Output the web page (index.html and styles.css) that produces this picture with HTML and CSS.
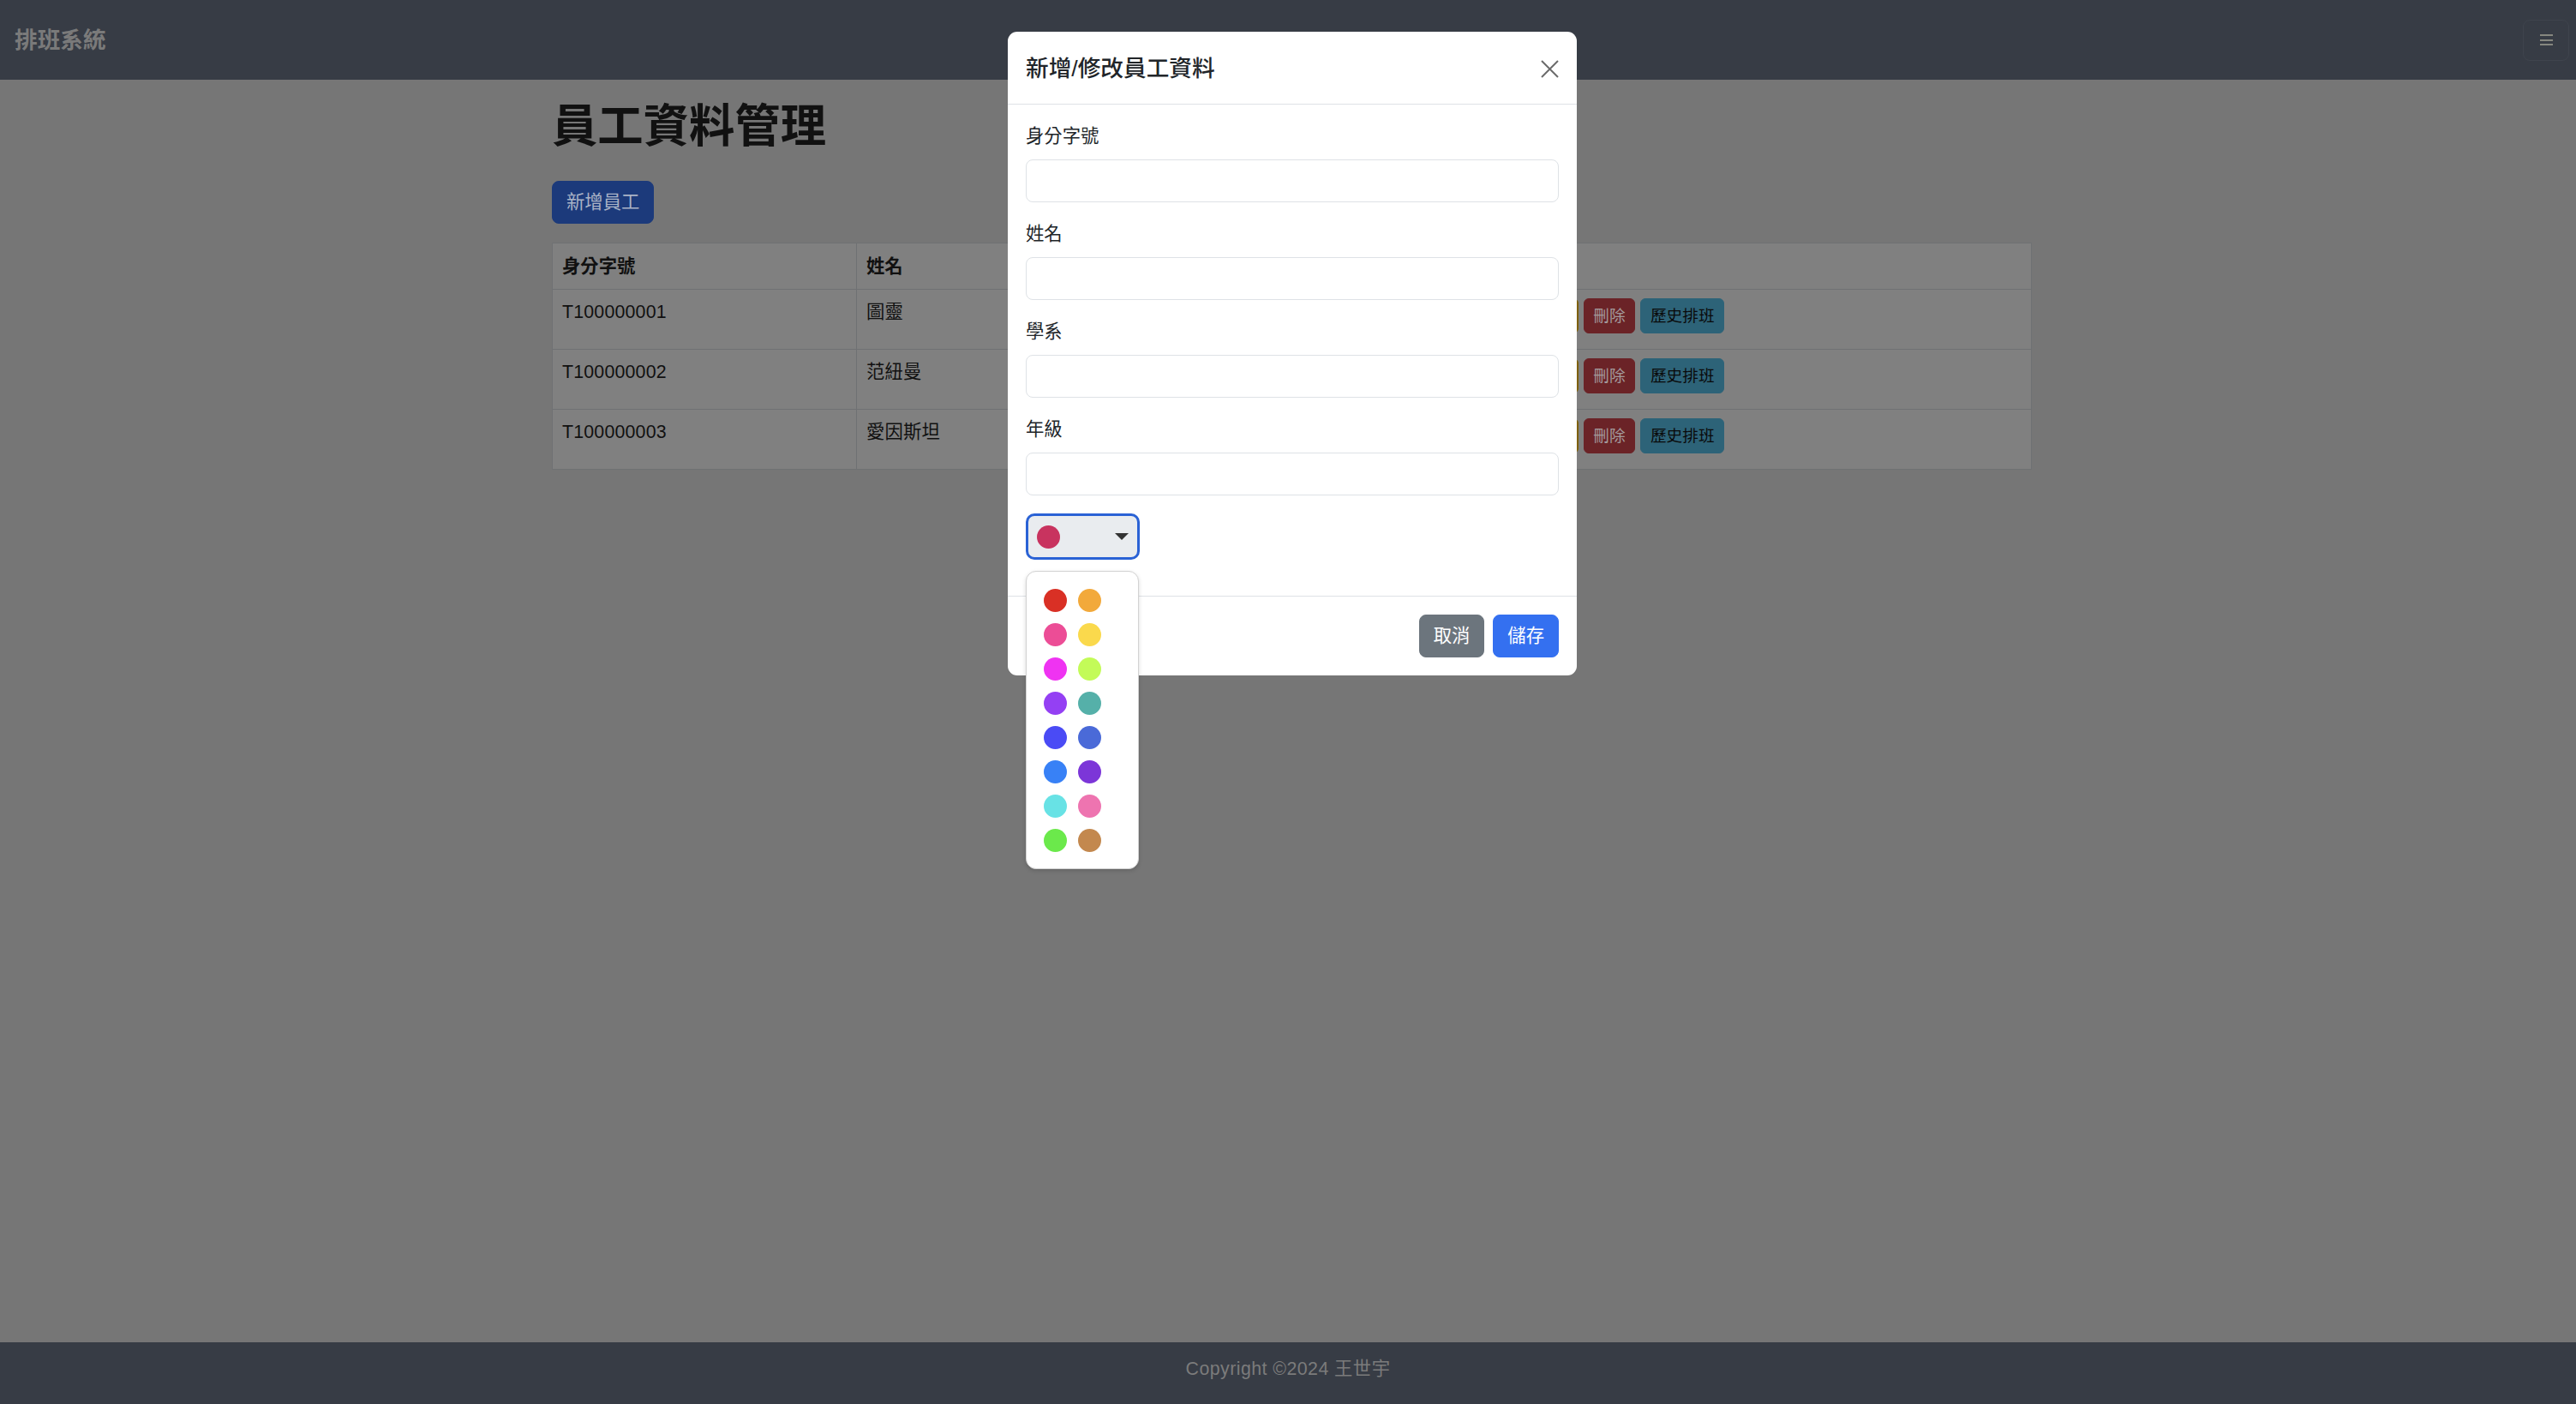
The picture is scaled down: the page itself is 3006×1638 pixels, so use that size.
FILE: index.html
```html
<!DOCTYPE html>
<html lang="zh-Hant">
<head>
<meta charset="utf-8">
<title>排班系統</title>
<link rel="stylesheet" href="styles.css">
</head>
<body>
<nav class="navbar">
  <span class="brand">排班系統</span>
  <button class="toggler" aria-label="menu"><span class="bar"></span><span class="bar"></span><span class="bar"></span></button>
</nav>

<main class="main">
  <div class="container">
    <h1 class="page-title">員工資料管理</h1>
    <button class="btn btn-add">新增員工</button>
    <table class="emp-table">
      <colgroup>
        <col class="c-id"><col class="c-name"><col class="c-dept"><col class="c-grade"><col>
      </colgroup>
      <thead>
        <tr><th>身分字號</th><th>姓名</th><th>學系</th><th>年級</th><th>操作</th></tr>
      </thead>
      <tbody>
        <tr>
          <td>T100000001</td><td>圖靈</td><td>資訊工程</td><td>4</td>
          <td><div class="actions"><button class="btn-sm btn-edit">修改</button><button class="btn-sm btn-del">刪除</button><button class="btn-sm btn-hist">歷史排班</button></div></td>
        </tr>
        <tr>
          <td>T100000002</td><td>范紐曼</td><td>數學</td><td>3</td>
          <td><div class="actions"><button class="btn-sm btn-edit">修改</button><button class="btn-sm btn-del">刪除</button><button class="btn-sm btn-hist">歷史排班</button></div></td>
        </tr>
        <tr>
          <td>T100000003</td><td>愛因斯坦</td><td>物理</td><td>2</td>
          <td><div class="actions"><button class="btn-sm btn-edit">修改</button><button class="btn-sm btn-del">刪除</button><button class="btn-sm btn-hist">歷史排班</button></div></td>
        </tr>
      </tbody>
    </table>
  </div>
</main>

<footer class="footer">Copyright ©2024 王世宇</footer>

<div class="modal">
  <div class="modal-header">
    <h5 class="modal-title">新增/修改員工資料</h5>
    <button class="btn-close" aria-label="close">
      <svg width="21" height="21" viewBox="0 0 21 21"><path d="M1 1L20 20M20 1L1 20" stroke="#6b6b6b" stroke-width="2" fill="none"/></svg>
    </button>
  </div>
  <div class="modal-body">
    <div class="field"><label class="form-label">身分字號</label><input class="form-control" type="text"></div>
    <div class="field"><label class="form-label">姓名</label><input class="form-control" type="text"></div>
    <div class="field"><label class="form-label">學系</label><input class="form-control" type="text"></div>
    <div class="field"><label class="form-label">年級</label><input class="form-control" type="text"></div>
    <div class="color-picker">
      <button class="color-select"><span class="dot" style="background:#c8335f"></span><span class="caret"></span></button>
      <div class="color-menu">
        <span class="dot" style="background:#d93025"></span>
        <span class="dot" style="background:#f2a93b"></span>
        <span class="dot" style="background:#ec4d96"></span>
        <span class="dot" style="background:#fad94c"></span>
        <span class="dot" style="background:#ef33f2"></span>
        <span class="dot" style="background:#c3fb58"></span>
        <span class="dot" style="background:#9440f3"></span>
        <span class="dot" style="background:#55b0a9"></span>
        <span class="dot" style="background:#4a4bf5"></span>
        <span class="dot" style="background:#4a6ad8"></span>
        <span class="dot" style="background:#3881f6"></span>
        <span class="dot" style="background:#7c36d8"></span>
        <span class="dot" style="background:#68e2e5"></span>
        <span class="dot" style="background:#ee74b0"></span>
        <span class="dot" style="background:#6be94b"></span>
        <span class="dot" style="background:#c3884e"></span>
      </div>
    </div>
  </div>
  <div class="modal-footer">
    <button class="btn btn-secondary">取消</button>
    <button class="btn btn-primary">儲存</button>
  </div>
</div>
</body>
</html>
```

FILE: styles.css
```css
* { box-sizing: border-box; }

html, body { margin: 0; padding: 0; }

body {
  font-family: "Liberation Sans", "Noto Sans CJK TC", sans-serif;
  font-size: 21.33px;
  line-height: 32px;
  color: #111;
  background: #767676;
  min-height: 100vh;
  display: flex;
  flex-direction: column;
  position: relative;
}

button { font-family: inherit; cursor: pointer; }

/* navbar */
.navbar {
  flex-shrink: 0;
  height: 93px;
  background: #373c45;
  display: flex;
  align-items: center;
  justify-content: space-between;
  padding: 0 8px 0 17px;
}
.brand {
  font-size: 26.67px;
  line-height: 40px;
  font-weight: 700;
  color: #7a7a7a;
}
.toggler {
  width: 54px;
  height: 48px;
  padding: 0;
  border: 1px solid #3f444d;
  border-radius: 8px;
  background: transparent;
  display: flex;
  flex-direction: column;
  align-items: center;
  justify-content: center;
  gap: 3.5px;
}
.bar { display: block; width: 15px; height: 2px; background: #86877f; }

/* main */
.main { flex: 1; }
.container {
  width: 1727px;
  margin-left: 644px;
  padding-top: 23px;
}
.page-title {
  margin: 0 0 31px;
  font-size: 53.33px;
  line-height: 64px;
  font-weight: 700;
  color: #111;
}
.btn {
  height: 50px;
  padding: 0 16px;
  font-size: 21.33px;
  line-height: 48px;
  border-radius: 8px;
  border: 1px solid transparent;
}
.btn-add {
  display: block;
  margin-bottom: 22px;
  background: #1c3a7b;
  border-color: #1c3a7b;
  color: #aab3c6;
}

/* table */
.emp-table {
  width: 100%;
  table-layout: fixed;
  border-collapse: collapse;
  background: #808080;
  border: 1px solid #6f7173;
}
.c-id { width: 355px; }
.c-name { width: 330px; }
.c-dept { width: 250px; }
.c-grade { width: 190px; }
.emp-table th,
.emp-table td {
  border: 1px solid #6f7173;
  text-align: left;
  vertical-align: top;
  line-height: 32px;
  color: #111;
}
.emp-table th { padding: 10.67px 11px; font-weight: 700; }
.emp-table td { padding: 10px 11px 18px; letter-spacing: 0.2px; }
.actions { display: flex; gap: 6px; letter-spacing: 0; }
.btn-sm {
  height: 41px;
  padding: 0 10.67px;
  font-size: 18.67px;
  line-height: 39px;
  border-radius: 6px;
  border: 1px solid transparent;
  white-space: nowrap;
}
.btn-edit { background: #7f6003; border-color: #7f6003; color: #111; }
.btn-del { background: #6b2327; border-color: #6b2327; color: #a39a9b; }
.btn-hist { background: #2d6378; border-color: #2d6378; color: #0a0a0a; }

/* footer */
.footer {
  flex-shrink: 0;
  height: 72px;
  padding-bottom: 10px;
  background: #373c45;
  color: #7b7b7b;
  display: flex;
  align-items: center;
  justify-content: center;
  font-size: 21.33px;
  letter-spacing: 0.45px;
}

/* modal */
.modal {
  position: absolute;
  top: 37px;
  left: 1176px;
  width: 664px;
  background: #fff;
  border-radius: 11px;
  color: #212529;
  z-index: 10;
}
.modal-header {
  display: flex;
  align-items: center;
  justify-content: space-between;
  padding: 23px 21px 21px;
  border-bottom: 1px solid #dee2e6;
}
.modal-title {
  margin: 0;
  font-size: 26.67px;
  line-height: 40px;
  font-weight: 500;
  color: #212529;
}
.btn-close {
  width: 21px;
  height: 21px;
  padding: 0;
  border: 0;
  background: transparent;
  display: flex;
}
.modal-body { padding: 21px; }
.form-label { display: block; margin-bottom: 11px; line-height: 32px; color: #212529; }
.form-control {
  display: block;
  width: 100%;
  height: 50px;
  margin-bottom: 21px;
  border: 1px solid #dee2e6;
  border-radius: 8px;
  background: #fff;
  font-size: 21.33px;
}
.color-picker { position: relative; margin-bottom: 21px; }
.color-select {
  width: 133px;
  height: 54px;
  padding: 0 10px;
  border: 3px solid #2a62d5;
  border-radius: 10px;
  background: #e9ecef;
  display: flex;
  align-items: center;
  justify-content: space-between;
}
.dot {
  display: block;
  width: 27px;
  height: 27px;
  border-radius: 50%;
}
.caret {
  width: 0;
  height: 0;
  border-left: 8px solid transparent;
  border-right: 8px solid transparent;
  border-top: 8px solid #333;
}
.color-menu {
  position: absolute;
  top: 67px;
  left: 0;
  width: 132px;
  padding: 20px 20px 19px 20px;
  background: #fff;
  border: 1px solid #d2d2d2;
  border-radius: 12px;
  box-shadow: 0 2px 5px rgba(0, 0, 0, 0.15);
  display: grid;
  grid-template-columns: 27px 27px;
  gap: 13px;
  z-index: 20;
}
.modal-footer {
  display: flex;
  justify-content: flex-end;
  gap: 10px;
  padding: 21px;
  border-top: 1px solid #dee2e6;
}
.btn-secondary { background: #6c757d; border-color: #6c757d; color: #fff; }
.btn-primary { background: #3470f0; border-color: #3470f0; color: #fff; }
```
